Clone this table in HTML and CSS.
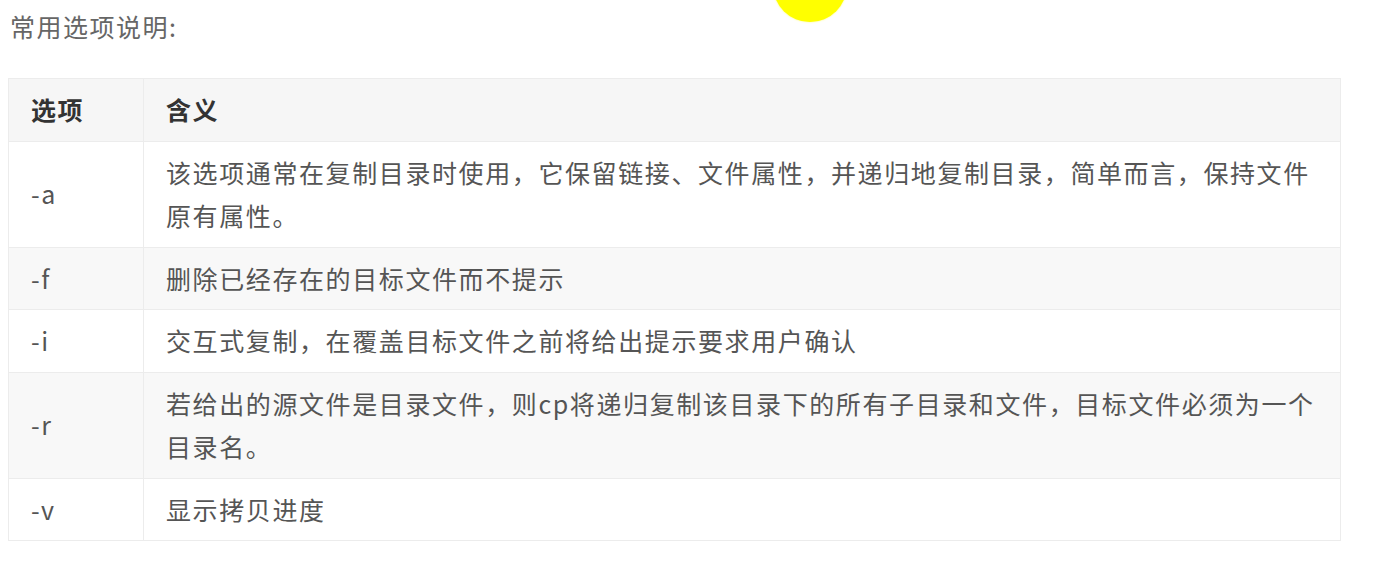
FILE: index.html
```html
<!DOCTYPE html>
<html lang="zh-CN">
<head>
  <meta charset="UTF-8">
  <meta name="viewport" content="width=device-width, initial-scale=1.0">
  <title>cp 常用选项</title>
  <link rel="stylesheet" href="styles.css">
</head>
<body>

  <div class="doc">
    <p class="intro">常用选项说明:</p>

    <table class="options">
      <thead>
        <tr>
          <th class="opt">选项</th>
          <th>含义</th>
        </tr>
      </thead>
      <tbody>
        <tr>
          <td class="opt">-a</td>
          <td>该选项通常在复制目录时使用，它保留链接、文件属性，并递归地复制目录，简单而言，保持文件原有属性。</td>
        </tr>
        <tr>
          <td class="opt">-f</td>
          <td>删除已经存在的目标文件而不提示</td>
        </tr>
        <tr>
          <td class="opt">-i</td>
          <td>交互式复制，在覆盖目标文件之前将给出提示要求用户确认</td>
        </tr>
        <tr>
          <td class="opt">-r</td>
          <td>若给出的源文件是目录文件，则cp将递归复制该目录下的所有子目录和文件，目标文件必须为一个目录名。</td>
        </tr>
        <tr>
          <td class="opt">-v</td>
          <td>显示拷贝进度</td>
        </tr>
      </tbody>
    </table>
  </div>

  <!-- cursor highlight from the screen recording -->
  <div class="cursor-spot"></div>

</body>
</html>
```

FILE: styles.css
```css
body {
  margin: 0;
  padding: 0;
  background-color: #fff;
  font-family: "Noto Sans CJK SC", "Noto Sans", sans-serif;
  color: #555;
}
.doc {
  padding: 8px 0 0 8px;
}
.intro {
  margin: 0 0 34px 2px;
  font-size: 25px;
  line-height: 36px;
  letter-spacing: 1.5px;
  color: #666;
}
.options {
  width: 1333px;
  border-collapse: collapse;
  font-size: 25px;
  letter-spacing: 1.6px;
}
.options th, .options td {
  padding: 9px 22px;
  line-height: 43.5px;
  text-align: left;
  border: 1px solid #ececec;
}
.options th {
  background-color: #f6f6f6;
  color: #333;
  font-weight: bold;
}
.options tbody tr:nth-child(even) {
  background-color: #f8f8f8;
}
.options .opt {
  width: 90px;
}
.cursor-spot {
  position: absolute;
  left: 773px;
  top: -52px;
  width: 74px;
  height: 74px;
  border-radius: 50%;
  background-color: #ffff00;
  box-shadow: 0 0 2px #ffff66;
}
```
